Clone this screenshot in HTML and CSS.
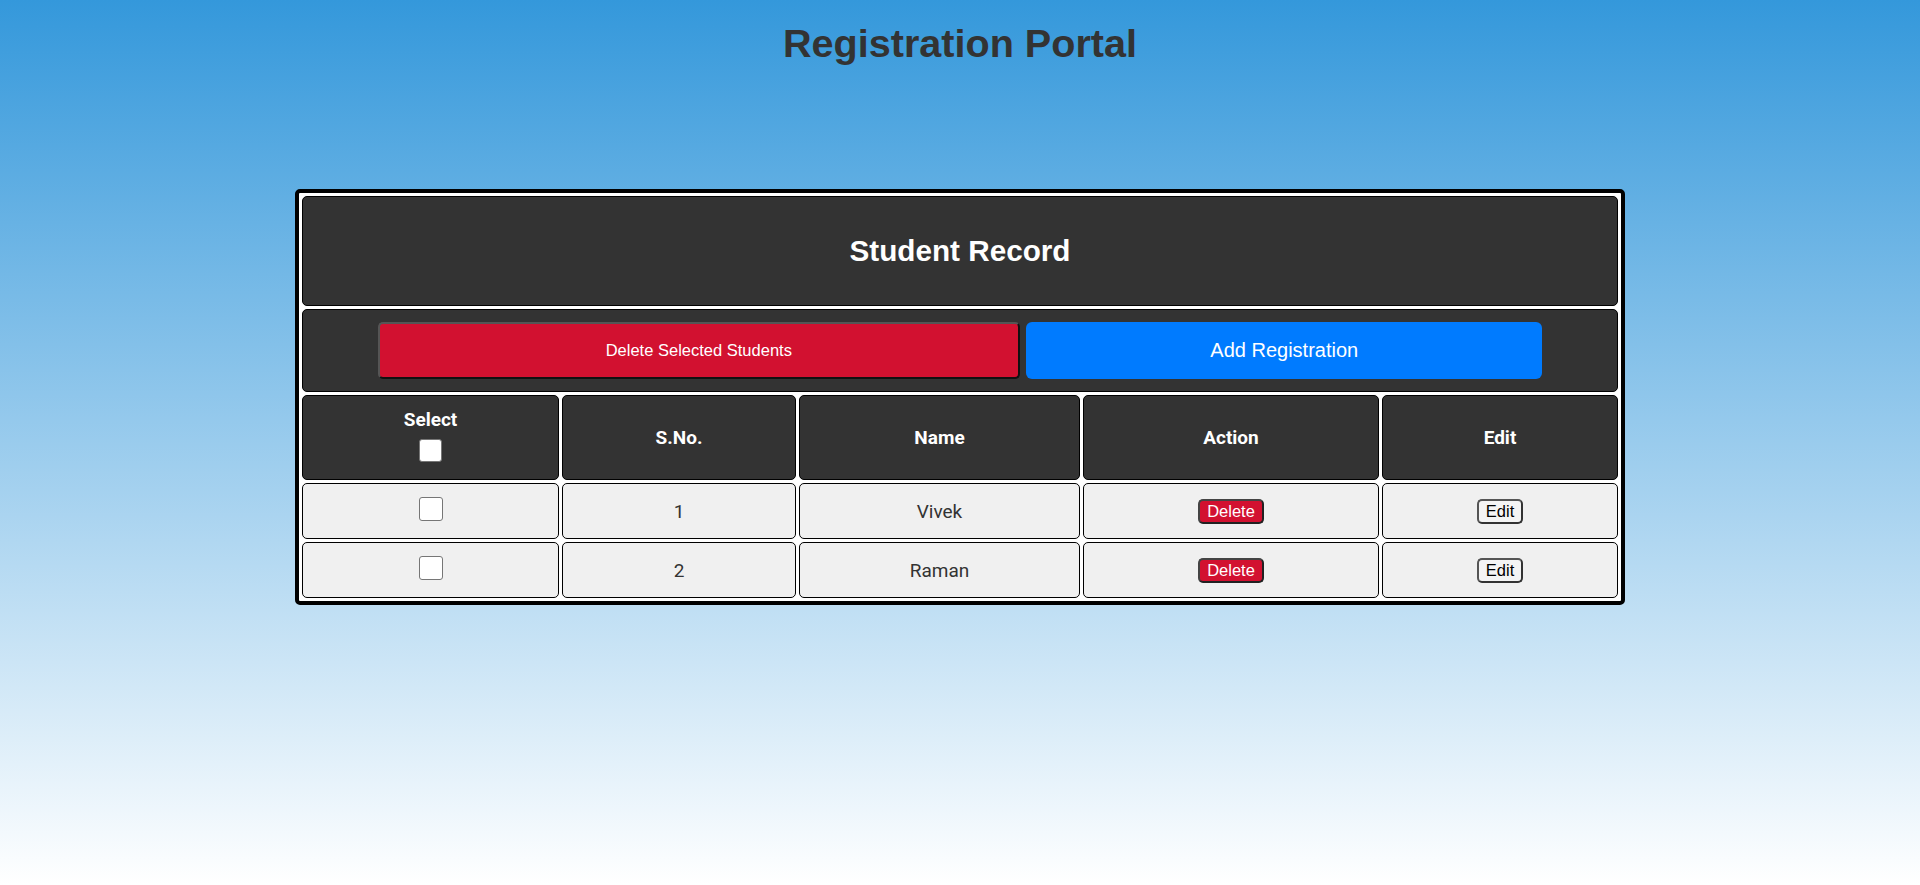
FILE: index.html
```html
<!DOCTYPE html>
<html lang="en">
<head>
<meta charset="utf-8">
<title>Registration Portal</title>
<link rel="stylesheet" href="styles.css">
</head>
<body>
  <h1 class="title">Registration Portal</h1>

  <div class="records">
    <div class="cell head span caption">
      <h2 class="records-title">Student Record</h2>
    </div>
    <div class="cell head span actions">
      <button class="btn-delete-selected">Delete Selected Students</button>
      <button class="btn-add">Add Registration</button>
    </div>

    <div class="cell head col-head">
      <span>Select</span>
      <input type="checkbox" class="check check-all">
    </div>
    <div class="cell head col-head">S.No.</div>
    <div class="cell head col-head">Name</div>
    <div class="cell head col-head">Action</div>
    <div class="cell head col-head">Edit</div>

    <div class="cell data"><input type="checkbox" class="check"></div>
    <div class="cell data">1</div>
    <div class="cell data">Vivek</div>
    <div class="cell data"><button class="btn-delete">Delete</button></div>
    <div class="cell data"><button class="btn-edit">Edit</button></div>

    <div class="cell data"><input type="checkbox" class="check"></div>
    <div class="cell data">2</div>
    <div class="cell data">Raman</div>
    <div class="cell data"><button class="btn-delete">Delete</button></div>
    <div class="cell data"><button class="btn-edit">Edit</button></div>
  </div>
</body>
</html>
```

FILE: styles.css
```css
html {
  min-height: 100%;
}

body {
  margin: 0;
  min-height: 100vh;
  background: linear-gradient(to bottom, #3498db 0%, #ffffff 100%);
  font-family: "Liberation Sans", Arial, sans-serif;
  font-size: 16.5px;
  color: #333;
}

.title {
  margin: 21px 0 0;
  text-align: center;
  font-family: "Liberation Sans", Arial, sans-serif;
  font-size: 39.6px;
  font-weight: bold;
  color: #333;
}

.records {
  width: 1316px;
  margin: 123px auto 0;
  border: 4px solid #000;
  border-radius: 5px;
  background: #fff;
  padding: 3px;
  display: grid;
  grid-template-columns: 257fr 234fr 281fr 296fr 236fr;
  gap: 3px;
}

.cell {
  border: 1px solid #000;
  border-radius: 5px;
  display: flex;
  align-items: center;
  justify-content: center;
  text-align: center;
  font-family: Roboto, "Liberation Sans", Arial, sans-serif;
}

.head {
  background: #333;
  color: #fff;
}

.span {
  grid-column: 1 / -1;
}

.caption {
  padding: 37px 12px 37px;
}

.records-title {
  margin: 0;
  font-family: "Liberation Sans", Arial, sans-serif;
  font-size: 29.7px;
  line-height: 34px;
  font-weight: bold;
  color: #fff;
}

.actions {
  padding: 12px 0;
  gap: 6px;
}

.btn-delete-selected {
  flex: 0 0 48.9%;
  height: 57px;
  box-sizing: border-box;
  background: #d21130;
  color: #fff;
  font-family: "Liberation Sans", Arial, sans-serif;
  font-size: 16.5px;
  border-style: solid;
  border-width: 2px;
  border-color: #555 #111 #111 #555;
  border-radius: 5px;
  padding: 0;
  cursor: pointer;
}

.btn-add {
  flex: 0 0 39.3%;
  height: 57px;
  box-sizing: border-box;
  background: #007bff;
  color: #fff;
  font-family: "Liberation Sans", Arial, sans-serif;
  font-size: 20px;
  border: none;
  border-radius: 6px;
  padding: 0;
  cursor: pointer;
}

.col-head {
  flex-direction: column;
  padding: 12px;
  font-size: 19px;
  font-weight: bold;
}

.check {
  -webkit-appearance: none;
  appearance: none;
  box-sizing: border-box;
  display: block;
  width: 24px;
  height: 24px;
  margin: 1px auto 5px;
  background: #fff;
  border: 1px solid #767676;
  border-radius: 3px;
}

.check-all {
  width: 23px;
  height: 23px;
  margin: 8px auto 5px;
}

.data {
  background: #f0f0f0;
  color: #333;
  padding: 12px;
  font-size: 19px;
}

.btn-delete,
.btn-edit {
  font-family: "Liberation Sans", Arial, sans-serif;
  font-size: 16.5px;
  line-height: normal;
  padding: 1px 7px;
  border-radius: 5px;
  cursor: pointer;
}

.btn-delete {
  background: #d21130;
  color: #fff;
  border-style: solid;
  border-width: 2px;
  border-color: #444 #222 #222 #444;
}

.btn-edit {
  background: #f4f4f4;
  color: #000;
  border-style: solid;
  border-width: 2px;
  border-color: #555 #333 #333 #555;
}
```
